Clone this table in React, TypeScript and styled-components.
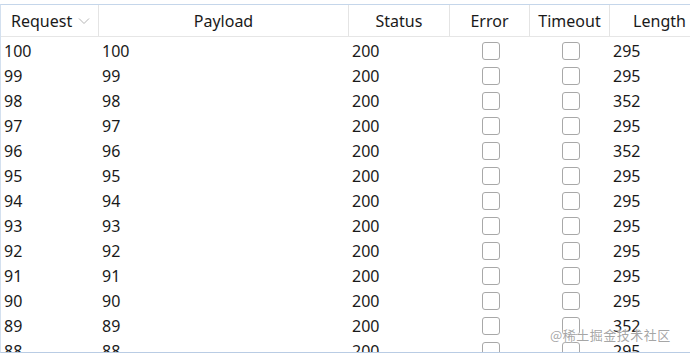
import React from "react";
import styled, { createGlobalStyle } from "styled-components";

const Global = createGlobalStyle`
  html, body { margin: 0; padding: 0; background: #fff; }
  body { font-family: "Noto Sans", "Open Sans", sans-serif; color: #1a1a1a; }
`;

const Frame = styled.div`
  position: relative;
  width: 690px;
  height: 355px;
  overflow: hidden;
  padding-top: 4px;
  box-sizing: border-box;
`;

const Grid = styled.div`
  height: 349px;
  border-top: 1px solid #c5d6ea;
  border-bottom: 1px solid #b9cce4;
  border-left: 1px solid #d3e0ef;
  box-sizing: border-box;
  overflow: hidden;
`;

const cols = "98px 250px 101px 80px 80px 100px";

const HeaderRow = styled.div`
  display: grid;
  grid-template-columns: ${cols};
  height: 32px;
  border-bottom: 1px solid #e6e6e6;
  box-sizing: border-box;
`;

const HeadCell = styled.div<{ $left?: boolean }>`
  display: flex;
  align-items: center;
  justify-content: ${(p) => (p.$left ? "flex-start" : "center")};
  padding-left: ${(p) => (p.$left ? "10px" : "0")};
  padding-top: 1px;
  border-right: 1px solid #e4e4e4;
  font-size: 16px;
  white-space: nowrap;
  box-sizing: border-box;
  gap: 6px;
`;

const Row = styled.div`
  display: grid;
  grid-template-columns: ${cols};
  height: 25px;
`;

const Cell = styled.div<{ $center?: boolean }>`
  display: flex;
  align-items: center;
  justify-content: ${(p) => (p.$center ? "center" : "flex-start")};
  padding-left: ${(p) => (p.$center ? "0" : "3px")};
  padding-top: 2px;
  font-size: 16px;
  box-sizing: border-box;
  white-space: nowrap;
`;

const Check = styled.span`
  width: 16px;
  height: 16px;
  border: 1px solid #a8a8a8;
  border-radius: 3px;
  background: #fff;
  margin-left: 2px;
`;

const Watermark = styled.div`
  position: absolute;
  left: 550px;
  top: 325px;
  font-family: "Noto Sans CJK SC", sans-serif;
  font-size: 13px;
  color: rgba(150, 150, 150, 0.85);
  text-shadow: 0 0 2px #fff, 0 0 2px #fff;
  letter-spacing: 0.5px;
`;

const Chevron = () => (
  <svg width="12" height="8" viewBox="0 0 12 8">
    <path d="M1 1.5 L6 6.5 L11 1.5" fill="none" stroke="#b5b5b5" strokeWidth="1" />
  </svg>
);

const lengths: Record<number, number> = { 98: 352, 96: 352, 89: 352 };

export default function App() {
  const rows = Array.from({ length: 13 }, (_, i) => 100 - i);
  return (
    <Frame>
      <Global />
      <Grid>
        <HeaderRow>
          <HeadCell $left>
            Request <Chevron />
          </HeadCell>
          <HeadCell>Payload</HeadCell>
          <HeadCell>Status</HeadCell>
          <HeadCell>Error</HeadCell>
          <HeadCell>Timeout</HeadCell>
          <HeadCell>Length</HeadCell>
        </HeaderRow>
        {rows.map((n) => (
          <Row key={n}>
            <Cell>{n}</Cell>
            <Cell>{n}</Cell>
            <Cell>200</Cell>
            <Cell $center>
              <Check />
            </Cell>
            <Cell $center>
              <Check />
            </Cell>
            <Cell>{lengths[n] ?? 295}</Cell>
          </Row>
        ))}
      </Grid>
      <Watermark>@稀土掘金技术社区</Watermark>
    </Frame>
  );
}
